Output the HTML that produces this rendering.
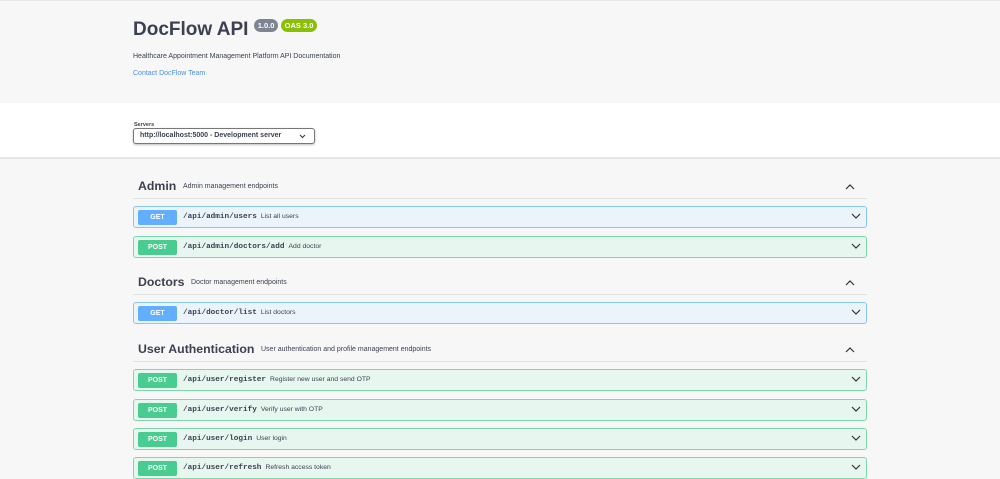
<!DOCTYPE html>
<html><head><style>
*{box-sizing:border-box;margin:0;padding:0}
body{width:1000px;height:477px;overflow:hidden;background:#f7f7f8;font-family:"Liberation Sans",sans-serif;color:#3b4151}
.info{height:103px;background:#f7f7f8;position:relative;border-top:1px solid #e8e8e8}
.title{position:absolute;left:133px;top:18px;font-size:19px;font-weight:bold;color:#3b4151}
.badge{display:inline-block;font-size:7.5px;color:#fff;border-radius:7px;padding:2px 4px;vertical-align:top;position:relative;top:0px;font-weight:bold}
.desc{position:absolute;left:133px;top:52px;font-size:7px}
.link{position:absolute;left:133px;top:69px;font-size:7px;color:#4990e2}
.servers{height:56px;background:#fff;position:relative;border-bottom:2px solid #e6e6e6}
.sl{position:absolute;left:134px;top:19px;font-size:5.5px;font-weight:bold}
.selbox{position:absolute;left:133px;top:25px;width:182px;height:16px;border:1px solid #777;border-radius:3px;font-size:7px;font-weight:bold;padding:3px 6px;box-shadow:0 1px 2px rgba(0,0,0,.25);background:#fff}
.tag{position:absolute;left:133px;width:734px;height:21px;border-bottom:1px solid #e0e0e3}
.tag b{font-size:12.3px;position:absolute;left:5px;top:1px}
.tag span{font-size:7px;position:absolute;top:5px}
.chev{position:absolute;right:12px;top:5px}
.op{position:absolute;left:133px;width:734px;height:22px;border:1px solid;border-radius:3px}
.get{background:#ebf3fb;border-color:#8cc3fb}
.post{background:#e8f6f0;border-color:#7fd7ae}
.m{position:absolute;left:4px;top:3px;width:39px;height:15px;border-radius:2px;color:#fff;font-size:7px;font-weight:bold;text-align:center;line-height:15px}
.get .m{background:#61affe}.post .m{background:#49cc90}
.p{position:absolute;left:49px;top:6px;font-family:"Liberation Mono",monospace;font-size:7.7px;font-weight:bold}
.s{font-family:"Liberation Sans",sans-serif;font-weight:normal;font-size:6.8px;margin-left:4px}
.oc{position:absolute;right:5px;top:6px}
</style></head><body>
<div class="info">
<div class="title">DocFlow API <span class="badge" style="background:#7d8492">1.0.0</span> <span class="badge" style="background:#89bf04;margin-left:-3px">OAS 3.0</span></div>
<div class="desc">Healthcare Appointment Management Platform API Documentation</div>
<div class="link">Contact DocFlow Team</div>
</div>
<div class="servers"><div class="sl">Servers</div><div class="selbox">http://localhost:5000 - Development server<svg style="position:absolute;right:8px;top:5px" width="7" height="5" viewBox="0 0 7 5"><path d="M1 1l2.5 2.5L6 1" stroke="#333" fill="none"/></svg></div></div>

<div class="tag" style="top:178px"><b>Admin</b><span style="left:50px">Admin management endpoints</span><svg class="chev" width="10" height="7" viewBox="0 0 10 7"><path d="M1 6l4-4 4 4" stroke="#333" stroke-width="1.2" fill="none"/></svg></div>
<div class="op get" style="top:206px"><div class="m">GET</div><div class="p">/api/admin/users<span class="s">List all users</span></div><svg class="oc" width="10" height="7" viewBox="0 0 10 7"><path d="M1 1l4 4 4-4" stroke="#333" stroke-width="1.2" fill="none"/></svg></div>
<div class="op post" style="top:236px"><div class="m">POST</div><div class="p">/api/admin/doctors/add<span class="s">Add doctor</span></div><svg class="oc" width="10" height="7" viewBox="0 0 10 7"><path d="M1 1l4 4 4-4" stroke="#333" stroke-width="1.2" fill="none"/></svg></div>

<div class="tag" style="top:274px"><b>Doctors</b><span style="left:58px">Doctor management endpoints</span><svg class="chev" width="10" height="7" viewBox="0 0 10 7"><path d="M1 6l4-4 4 4" stroke="#333" stroke-width="1.2" fill="none"/></svg></div>
<div class="op get" style="top:302px"><div class="m">GET</div><div class="p">/api/doctor/list<span class="s">List doctors</span></div><svg class="oc" width="10" height="7" viewBox="0 0 10 7"><path d="M1 1l4 4 4-4" stroke="#333" stroke-width="1.2" fill="none"/></svg></div>

<div class="tag" style="top:341px"><b>User Authentication</b><span style="left:128px">User authentication and profile management endpoints</span><svg class="chev" width="10" height="7" viewBox="0 0 10 7"><path d="M1 6l4-4 4 4" stroke="#333" stroke-width="1.2" fill="none"/></svg></div>
<div class="op post" style="top:369px"><div class="m">POST</div><div class="p">/api/user/register<span class="s">Register new user and send OTP</span></div><svg class="oc" width="10" height="7" viewBox="0 0 10 7"><path d="M1 1l4 4 4-4" stroke="#333" stroke-width="1.2" fill="none"/></svg></div>
<div class="op post" style="top:399px"><div class="m">POST</div><div class="p">/api/user/verify<span class="s">Verify user with OTP</span></div><svg class="oc" width="10" height="7" viewBox="0 0 10 7"><path d="M1 1l4 4 4-4" stroke="#333" stroke-width="1.2" fill="none"/></svg></div>
<div class="op post" style="top:428px"><div class="m">POST</div><div class="p">/api/user/login<span class="s">User login</span></div><svg class="oc" width="10" height="7" viewBox="0 0 10 7"><path d="M1 1l4 4 4-4" stroke="#333" stroke-width="1.2" fill="none"/></svg></div>
<div class="op post" style="top:457px"><div class="m">POST</div><div class="p">/api/user/refresh<span class="s">Refresh access token</span></div><svg class="oc" width="10" height="7" viewBox="0 0 10 7"><path d="M1 1l4 4 4-4" stroke="#333" stroke-width="1.2" fill="none"/></svg></div>
</body></html>
